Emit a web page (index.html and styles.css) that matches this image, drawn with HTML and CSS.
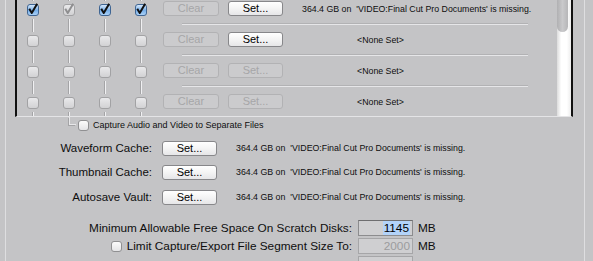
FILE: index.html
```html
<!DOCTYPE html>
<html lang="en">
<head>
    <meta charset="UTF-8">
    <title>Scratch Disks</title>
    <link rel="stylesheet" href="styles.css">
</head>
<body>
    <div class="panel">
        <div class="disk-table">
            <div class="rows">
                <div class="row">
                    <div class="checks">
                        <div class="chk-cell"><span class="chk on"><svg viewBox="0 0 12 12"><path d="M1.5 4.5 L4.5 9.5 L11 -1.5"/></svg></span></div>
                        <div class="chk-cell"><span class="chk dim-on"><svg viewBox="0 0 12 12"><path d="M1.5 4.5 L4.5 9.5 L11 -1.5"/></svg></span></div>
                        <div class="chk-cell"><span class="chk on"><svg viewBox="0 0 12 12"><path d="M1.5 4.5 L4.5 9.5 L11 -1.5"/></svg></span></div>
                        <div class="chk-cell"><span class="chk on"><svg viewBox="0 0 12 12"><path d="M1.5 4.5 L4.5 9.5 L11 -1.5"/></svg></span></div>
                    </div>
                    <div class="detail">
                        <div class="detail-main">
                            <button class="btn" disabled>Clear</button>
                            <button class="btn">Set...</button>
                            <span class="status">364.4 GB on &nbsp;'VIDEO:Final Cut Pro Documents' is missing.</span>
                        </div>
                        <div class="sep"></div>
                    </div>
                </div>
                <div class="row">
                    <div class="checks">
                        <div class="chk-cell"><span class="chk"></span></div>
                        <div class="chk-cell"><span class="chk"></span></div>
                        <div class="chk-cell"><span class="chk"></span></div>
                        <div class="chk-cell"><span class="chk"></span></div>
                    </div>
                    <div class="detail">
                        <div class="detail-main">
                            <button class="btn" disabled>Clear</button>
                            <button class="btn">Set...</button>
                            <span class="status none">&lt;None Set&gt;</span>
                        </div>
                        <div class="sep"></div>
                    </div>
                </div>
                <div class="row">
                    <div class="checks">
                        <div class="chk-cell"><span class="chk"></span></div>
                        <div class="chk-cell"><span class="chk"></span></div>
                        <div class="chk-cell"><span class="chk"></span></div>
                        <div class="chk-cell"><span class="chk"></span></div>
                    </div>
                    <div class="detail">
                        <div class="detail-main">
                            <button class="btn" disabled>Clear</button>
                            <button class="btn" disabled>Set...</button>
                            <span class="status none">&lt;None Set&gt;</span>
                        </div>
                        <div class="sep"></div>
                    </div>
                </div>
                <div class="row">
                    <div class="checks">
                        <div class="chk-cell"><span class="chk"></span></div>
                        <div class="chk-cell"><span class="chk"></span></div>
                        <div class="chk-cell"><span class="chk"></span></div>
                        <div class="chk-cell"><span class="chk"></span></div>
                    </div>
                    <div class="detail">
                        <div class="detail-main">
                            <button class="btn" disabled>Clear</button>
                            <button class="btn" disabled>Set...</button>
                            <span class="status none">&lt;None Set&gt;</span>
                        </div>
                        <div class="sep"></div>
                    </div>
                </div>
            </div>
            <div class="scrollbar"><div class="thumb"></div></div>
        </div>

        <div class="capture">
            <span class="elbow"></span>
            <span class="chk small"></span>
            <span class="capture-label">Capture Audio and Video to Separate Files</span>
        </div>

        <div class="cache-row">
            <span class="cache-label">Waveform Cache:</span>
            <button class="btn">Set...</button>
            <span class="status">364.4 GB on &nbsp;'VIDEO:Final Cut Pro Documents' is missing.</span>
        </div>
        <div class="cache-row">
            <span class="cache-label">Thumbnail Cache:</span>
            <button class="btn">Set...</button>
            <span class="status">364.4 GB on &nbsp;'VIDEO:Final Cut Pro Documents' is missing.</span>
        </div>
        <div class="cache-row last">
            <span class="cache-label">Autosave Vault:</span>
            <button class="btn">Set...</button>
            <span class="status">364.4 GB on &nbsp;'VIDEO:Final Cut Pro Documents' is missing.</span>
        </div>

        <div class="space-row">
            <span class="space-label">Minimum Allowable Free Space On Scratch Disks:</span>
            <span class="field"><span class="selected">1145</span></span>
            <span class="unit">MB</span>
        </div>
        <div class="space-row">
            <span class="space-label"><span class="chk small"></span>Limit Capture/Export File Segment Size To:</span>
            <span class="field disabled">2000</span>
            <span class="unit">MB</span>
        </div>
        <div class="space-row">
            <span class="space-label"></span>
            <span class="field disabled"></span>
        </div>
    </div>
</body>
</html>
```

FILE: styles.css
```css
* {
    box-sizing: border-box;
}
html, body {
    margin: 0;
    height: 261px;
    overflow: hidden;
}
body {
    background: #c4c4c6;
    font-family: "Liberation Sans", Arial, sans-serif;
    color: #0e0e0e;
}
.panel {
    margin-left: 5px;
    width: 580px;
    height: 261px;
    border-left: 1px solid #dedee0;
    border-right: 1px solid #dedee0;
}

/* disk list */
.disk-table {
    display: flex;
    margin-left: 9px;
    width: 558px;
    height: 117px;
    border-left: 2px solid #111;
    border-right: 2px solid #111;
    border-bottom: 1px solid #e4e4e6;
}
.rows {
    flex: 1;
    overflow: hidden;
}
.row {
    display: flex;
    height: 31px;
    padding-left: 10px;
}
.row:first-child {
    margin-top: -6px;
}
.checks {
    display: flex;
    gap: 24px;
}
.chk-cell {
    display: flex;
    flex-direction: column;
    align-items: center;
    width: 12px;
}
.chk-cell::before,
.chk-cell::after {
    content: '';
    flex: 1;
    width: 1px;
    background: #f0f0f2;
    box-shadow: -1px 0 0 #a4a4a6;
}
.chk-cell .chk {
    margin: 3px 0;
}
.detail {
    display: flex;
    flex-direction: column;
    flex: 1;
    margin-left: 16px;
}
.detail-main {
    display: flex;
    align-items: center;
    flex: 1;
}
.detail-main .btn + .btn {
    margin-left: 9px;
}
.detail-main .status {
    margin-left: 19px;
}
.detail-main .status.none {
    margin-left: 74px;
}
.sep {
    height: 2px;
    width: 346px;
    margin-left: 19px;
    background: linear-gradient(#b2b2b4 50%, #e6e6e8 50%);
}
.scrollbar {
    width: 14px;
    background: linear-gradient(to right, #dcdcdc, #fff 30%, #fff 70%, #ededed);
}
.thumb {
    width: 11px;
    height: 32px;
    background: linear-gradient(to right, #b0b0b2, #c9c9cb 50%, #b6b6b8);
    border-radius: 0 0 6px 6px;
}

/* checkboxes */
.chk {
    display: inline-block;
    position: relative;
    width: 12px;
    height: 12px;
    flex: none;
    border: 1px solid #a2a2a4;
    border-radius: 3px;
    background: linear-gradient(#e9e9eb, #d2d2d4);
}
.chk svg {
    position: absolute;
    left: 0;
    top: 0;
    width: 10px;
    height: 10px;
    overflow: visible;
}
.chk path {
    fill: none;
    stroke: #111;
    stroke-width: 2.4;
    stroke-linejoin: round;
}
.chk.on {
    border-color: #3f6593;
    background: linear-gradient(#d6e8fb, #78b0ea 55%, #a9d0f6);
}
.chk.dim-on path {
    stroke: #8e8e90;
}
.chk.small {
    width: 11px;
    height: 11px;
    background: linear-gradient(#fbfbfb, #e4e4e6);
    border-color: #909092;
}

/* buttons */
.btn {
    width: 56px;
    height: 15px;
    padding: 0;
    flex: none;
    border: 1px solid #87878a;
    border-radius: 3px;
    background: linear-gradient(#ffffff, #f4f4f4 50%, #e6e6e8);
    font-family: "Liberation Sans", Arial, sans-serif;
    font-size: 11px;
    line-height: 13px;
    color: #000;
}
.btn + .btn {
    width: 55px;
}
.btn:disabled {
    background: #cbcbcd;
    border-color: #b2b2b4;
    color: #a6a6a8;
}
.status {
    font-size: 8.8px;
    white-space: nowrap;
}

/* below the list */
.capture {
    display: flex;
    align-items: center;
    height: 16px;
    padding-left: 63px;
}
.elbow {
    align-self: flex-start;
    width: 7px;
    height: 8px;
    border-left: 1px solid #e8e8ea;
    border-bottom: 1px solid #e8e8ea;
    box-shadow: -1px 1px 0 #a4a4a6;
}
.capture .chk {
    margin-left: 2px;
}
.capture-label {
    margin-left: 4px;
    font-size: 9px;
}
.cache-row {
    display: flex;
    align-items: center;
    height: 16px;
    margin-top: 8px;
}
.capture + .cache-row {
    margin-top: 7px;
}
.cache-row.last {
    margin-top: 9px;
}
.cache-label {
    width: 146px;
    text-align: right;
    font-size: 11.5px;
}
.cache-row .btn {
    margin-left: 10px;
    width: 55px;
}
.cache-row .status {
    margin-left: 19px;
}
.space-row {
    display: flex;
    align-items: center;
    height: 18px;
}
.cache-row + .space-row {
    margin-top: 14px;
}
.space-label {
    display: flex;
    align-items: center;
    justify-content: flex-end;
    gap: 5px;
    width: 346px;
    font-size: 11.8px;
    white-space: nowrap;
}
.field {
    display: flex;
    align-items: center;
    justify-content: flex-end;
    width: 55px;
    height: 16px;
    margin-left: 6px;
    padding-right: 2px;
    border: 1px solid #8c8c8e;
    border-top-color: #6e6e70;
    background: #cfcfd1;
    font-size: 11.8px;
    color: #000;
}
.field.disabled {
    color: #9c9c9e;
    border-color: #a6a6a8;
}
.selected {
    background: #b3d3f9;
    padding: 0 1px;
}
.unit {
    margin-left: 5px;
    font-size: 11.8px;
}
```
